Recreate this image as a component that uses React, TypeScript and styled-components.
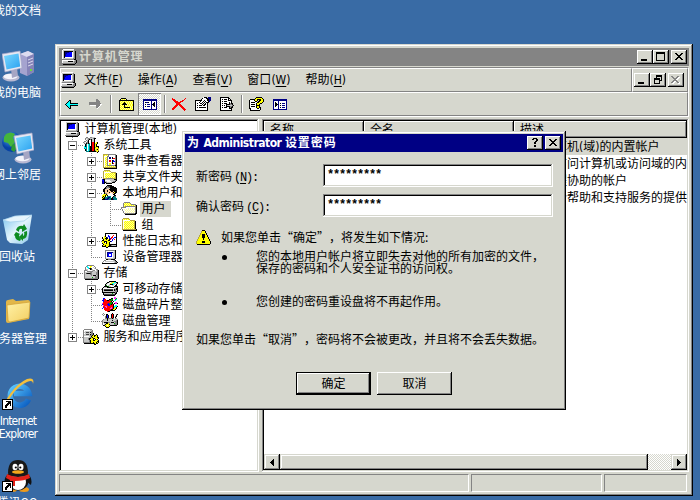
import React from 'react';
import styled, { createGlobalStyle, css } from 'styled-components';

const FACE = '#d6d7ce';
const GRAY = '#848484';
const NAVY = '#000084';

const Global = createGlobalStyle`
  * { box-sizing: border-box; }
  body { margin: 0; background: #396ba5; overflow: hidden; }
  svg { display: block; flex: none; }
`;

const raised = css`
  box-shadow: inset -1px -1px #000, inset 1px 1px #fff, inset -2px -2px ${GRAY};
`;
const windowEdge = css`
  box-shadow: inset -1px -1px #000, inset 1px 1px ${FACE}, inset -2px -2px ${GRAY}, inset 2px 2px #fff;
`;
const sunken = css`
  box-shadow: inset -1px -1px #fff, inset 1px 1px ${GRAY}, inset -2px -2px ${FACE}, inset 2px 2px #000;
`;

/* ---------- pixel icons ---------- */

const palette: Record<string, string> = {
  k: '#000', w: '#fff', g: '#848484', l: '#c6c7c6', b: '#0000ff', n: '#000084',
  y: '#ffff00', Y: '#ffff9c', o: '#b5a542', c: '#00ffff', r: '#ff0000', R: '#840000',
  G: '#00a200', t: '#008284', s: '#ffcf9c', d: '#424142', m: '#ff31ff',
};

function Pixels({ rows }: { rows: string[] }) {
  const w = Math.max(...rows.map((r) => r.length));
  const out: React.ReactNode[] = [];
  rows.forEach((row, y) => {
    let x = 0;
    while (x < row.length) {
      const ch = row[x];
      let end = x + 1;
      while (end < row.length && row[end] === ch) end++;
      if (palette[ch]) out.push(<rect key={`${x}-${y}`} x={x} y={y} width={end - x} height={1} fill={palette[ch]} />);
      x = end;
    }
  });
  return <svg width={w} height={rows.length} shapeRendering="crispEdges">{out}</svg>;
}

const art = {
  computer: [
    '..wwwwwwwwwww...',
    '.wlllllllllllg..',
    '.wlkkkkkkkkklgk.',
    '.wlknnnnbbbwlgk.',
    '.wlknnbbbbbwlgk.',
    '.wlknbbbbbbwlgk.',
    '.wlknbbbbbbwlgk.',
    '.wlkbbbbbbbwlgk.',
    '.wlkwwwwwwwwlgk.',
    '.wllllllllllggk.',
    '..gggggggggggkk.',
    '.wwwwwwwwwwwwlgk',
    '.wlllllkkkkklggk',
    '.wlllllllllllggk',
    '.gggggggggggggk.',
    '..kkkkkkkkkkkk..',
  ],
  folder: [
    '................',
    '..oooooo........',
    '.oYyYyYyo.......',
    '.owwwwwwwooooo..',
    '.owYyYyYyYyYyok.',
    '.owyYyYyYyYyYok.',
    '.owYyYyYyYyYyok.',
    '.owyYyYyYyYyYok.',
    '.owYyYyYyYyYyok.',
    '.owyYyYyYyYyYok.',
    '.owYyYyYyYyYyok.',
    '.owyYyYyYyYyYok.',
    '.ooooooooooooook',
    '..kkkkkkkkkkkkkk',
    '................',
    '................',
  ],
  folderOpen: [
    '................',
    '...gggggg.......',
    '..gYyYyYyg......',
    '..gyYyYyYyggggg.',
    '..gYyYyYyYyYyYgk',
    '..gyggggggggggok',
    'gggggwwwwwwwwwgk',
    'gwwwwwwYwYwYwYgk',
    '.gwYwYwYwYwYwYgk',
    '.gwwYwYwYwYwYwgk',
    '..gwwYwYwYwYwYgk',
    '..gwYwYwYwYwYwgk',
    '...gggggggggggkk',
    '....kkkkkkkkkkk.',
    '................',
    '................',
  ],
  tools: [
    '...gg..gglll....',
    '..gllgglllgkk...',
    '..gwlgkgkllk....',
    '...glk..kllk....',
    '.gg.gk..kllk....',
    'glwggk..krrk.yk.',
    '.glkgkt.krrkyyk.',
    '..ktwct.krrkyk..',
    '..ktwct.krrkyk..',
    '.cktwctkkrrkykkk',
    '.cctwctkkrrkoyyk',
    '.tctwctkkrrkyyyo',
    '..ktwctkkrrkyoky',
    '..ktwctkkrrkoyyo',
    '...tttkkkkkkkoyk',
    '..............k.',
  ],
  events: [
    '................',
    '.ooooogggggggg..',
    '.oyYyYgwwwwwwgk.',
    '.owwwggwwwwwwgk.',
    '.owYygwnnwkwwgk.',
    '.owyYgwnnwkrrgk.',
    '.owYygwwwwwwwgk.',
    '.owyYgwrrwkbwgk.',
    '.owYygwrrwkbbgk.',
    '.owyYgwwwwkwwgk.',
    '.owYygwyywkrwgk.',
    '.owyYgwyywwwwgk.',
    '.owYyggggggggkk.',
    '.owyYyYyYyYyYok.',
    '.oooooooooooook.',
    '..kkkkkkkkkkkkk.',
  ],
  share: [
    '................',
    '..oooooo........',
    '.oYyYyYyo.......',
    '.owwwwwwwooooo..',
    '.owYyYyYyYyYyok.',
    '.owyYyYyYyYyYok.',
    '.owYyYyYyYyYyok.',
    '.owyYyYyYyYyYok.',
    '.owYyYyYyYyYyok.',
    '.oooogggggooook.',
    'bkklllllllllkkk.',
    'bbkwwwwwlllllgk.',
    'nbkllwwwwllggk..',
    'nbkkglllllkkk...',
    'nnk.kkkkkk......',
    '................',
  ],
  users: [
    '.....kkkkk......',
    '....kgddkkkk....',
    '...kgggdkkkkkk..',
    '..kkgllskkkkkkk.',
    '.kklssskkkkkkkk.',
    '.kkssksskkkkkkk.',
    '.kksskssskkskkk.',
    '..ksssskssskykk.',
    '..kggssswwsskk..',
    '.yyykswwwwwkk...',
    'yyykykwwwwwwkk..',
    'ykykwttttwwktg..',
    'kyktttnntwkttt..',
    'ykkttnnttkktttt.',
    'kkknnntttkknttt.',
    '................',
  ],
  perf: [
    '...kkkkkkkkkkkk.',
    '...kwwwwwwwwwwk.',
    '...kwwbwwwwrwwk.',
    '..ykwwbbwwrwwwk.',
    'k.yykbwbwrrwbbk.',
    'kyykkkwbbrwbwwk.',
    '.kyykyykrwbwrwk.',
    'kkyyyykkwwbwwwk.',
    'yykkkyyykbwwwwk.',
    'yyk.kyykwwwwwwk.',
    'kyyykyykwwwwwwk.',
    '.kyyyyykkkkkkkk.',
    'kyykyyykkgllllk.',
    'kkkkyykkkkkkkkk.',
    '....kk..........',
    '................',
  ],
  device: [
    '................',
    '...ggggggggggk..',
    '...gwwwwwwwwlk..',
    '...gwnnnnnnllk..',
    '...gwnbbbbwllk..',
    '...gwnbwwbwllk..',
    '...gwnbwwbwllk..',
    '...gwnbbbbwllk..',
    '...gwwwwwwwllk..',
    '...gllllllllgk..',
    '....kkgggkkkk...',
    '..ggwwwwwwwlgk..',
    '.gwllllllllllgk.',
    'gwwwwwwwwwwwlggk',
    'kkkkkkkkkkkkkkk.',
    '................',
  ],
  storage: [
    '....ggggggg.....',
    '...gcwwyywwg....',
    '..gwccwywwlwg...',
    '..gwwcdkdwwlg...',
    '..gllwwkdlwwwgg.',
    '.ggglwwwwlggwlgk',
    '.gwwggggggllllgk',
    '.glllllggllllggk',
    '.gldkkkdgllllggk',
    '.glllllggllllggk',
    '.gllllllglkkklgk',
    '.gllllllllllgggk',
    '.glllllllGllgggk',
    '.ggggggggggggggk',
    '..kkkkkkkkkkkkk.',
    '................',
  ],
  removable: [
    '.......kkkkkkk..',
    '.....kklwlyycckk',
    '....klwwyycclllk',
    '...klwwlkkkclwk.',
    '...kGwllwwllwkk.',
    '..kkkkGllwwwkkkk',
    '.klllkkkkkkklllk',
    'kwwwwwwwwwwwllkk',
    'kldddddddddlkgkk',
    'klkkkkkkkkklkggk',
    'kllllllllllllggk',
    'kkkkkkkkkkkkkgk.',
    '.kllllllllGllkk.',
    '.kdddddddddddk..',
    '..kkkkkkkkkkk...',
    '................',
  ],
  defrag: [
    '............mm..',
    '.bb......kk.mmG.',
    '.brr...kkGG..Gc.',
    'bbrrrkkrGGk.cc..',
    '.brrrrrrrk.k....',
    '.rrrrrrrGGk..mm.',
    'mrrrrrbGGGk.kmmk',
    'brrrrbbbGkrk....',
    '.mrrrrbbrrrk.cc.',
    '.rrmmrrrrrrkccck',
    '.brrmrrrrmrkcyk.',
    'b.rrrrrrmmrkyyk.',
    '..rrrrrrrkkyyk..',
    '...rrrrrkkkkk...',
    '.....rkk........',
    '................',
  ],
  disk: [
    '.g........k..ww.',
    'gwg.kk...krk.wgk',
    '.gw.kbk..krk.wk.',
    '..wgkbk..krkwgk.',
    '..wgkbk..krkwk..',
    '..wggkggggkgwgg.',
    '.glllklllllllllg',
    'gllllkllllklllgk',
    'glllllllllllgggk',
    'glkkkkgglkkklggk',
    'gwllkkylllllGggk',
    'gwlkyyykllllgggk',
    '.kkyywyykkkkkkk.',
    '...kyyyk........',
    '....kkk.........',
    '................',
  ],
  services: [
    '.gggggggg.......',
    'gwwwwwwllg......',
    'gwllllllgg......',
    'glldddlkgg......',
    'gwllllllggk.....',
    'glldddlkggk..k..',
    'gllllllggkykkyk.',
    'gwwwwwllkyykyyk.',
    'gllllllggkyyyykk',
    'gllllgkkyykkyyyk',
    'gllllgkyyyk.kyk.',
    'glllllgkyykkyyyk',
    'glllllgkyyyyyykk',
    'gggggggkyykyykyk',
    '.kkkkkkkkkkkykk.',
    '...........kk...',
  ],
  back: [
    '....kk.......',
    '...kck.......',
    '..kcck.......',
    '.kccckkkkkkkk',
    'kcccccccccccc',
    '.kccckkkkkkkk',
    '..kcck.......',
    '...kck.......',
    '....kk.......',
  ],
  forward: [
    '.......gg....',
    '.......ggg...',
    '.......gggg..',
    'ggggggggggg..',
    'gggggggggggg.',
    'gggggggggggww',
    '.wwwwwwggggw.',
    '.......gggw..',
    '.......ggw...',
    '........w....',
  ],
  up: [
    '..kkkkk........',
    '.kYyYyYk.......',
    'kkkkkkkkkkkkkkk',
    'kyYyYyYyYyYyYyk',
    'kYyYykyYyYyYyYk',
    'kyYykkkYyYyYyYk',
    'kYykkkkkYyYyYyk',
    'kyYyYkYyYyYyYyk',
    'kYyYykyYyYyYyYk',
    'kyYyYkkkkkkYyYk',
    'kYyYyYyYyYyYyYk',
    'kyYyYyYyYyYyYyk',
    'kkkkkkkkkkkkkkk',
  ],
  treePane: [
    'nnnnnnnnnnnnnn',
    'nnnnnnnnnnnnnn',
    'nwwwwwwwnwwwwn',
    'nwknnkwwnwwkwn',
    'nwwwwwwwnwkkwn',
    'nwkwnnnwnkkkwn',
    'nwwwwwwwnwkkwn',
    'nwkwnnnwnwwkwn',
    'nwwwwwwwnwwwwn',
    'nwwwwwwwnwwwwn',
    'nnnnnnnnnnnnnn',
  ],
  actionPane: [
    'nnnnnnnnnnnnnn',
    'nnnnnnnnnnnnnn',
    'nwwwwnwwwwwwwn',
    'nwkwwnwwwwwwwn',
    'nwkkwnwkwnnnwn',
    'nwkkknwwwwwwwn',
    'nwkkwnwkwnnnwn',
    'nwkwwnwwwwwwwn',
    'nwwwwnwkwnnnwn',
    'nwwwwnwwwwwwwn',
    'nnnnnnnnnnnnnn',
  ],
  del: [
    'r............r',
    'rrr.........r.',
    '.rrr......rr..',
    '..rrrr..rrr...',
    '...rrrrrr.....',
    '....rrrr......',
    '....rrrrr.....',
    '...rrr.rrr....',
    '..rrr...rrr...',
    '.rrr.....rrr..',
    'rrr.......rrr.',
    'rr.........rrr',
    '............r.',
  ],
  props: [
    '........wkkk.nnn',
    '.......kwwwkknnn',
    '......kwwwwwkknn',
    'kkkkkkkwwkwwkknn',
    'kwwwwkwwkwkwwkn.',
    'kwwwkwwkwkwkkk..',
    'kwkwwkkwkwkwk...',
    'kwwwwwwkwkkwk...',
    'kwkwkkkwkkwwk...',
    'kwwwwwwwwwwwk...',
    'kwkwkkkkkkkwk...',
    'kwwwwwwwwwwwk...',
    'kwwwwwwwwwwwk...',
    'kkkkkkkkkkkkk...',
  ],
  exportList: [
    'kkkkkkkkk.....',
    'kwwwwwwwkk....',
    'kwkwkkkwkwk...',
    'kwwwwwwwkkkk..',
    'kwkwkkkwwwwk..',
    'kwwwwwwwwkwk..',
    'kwkwkkkwwkgkk.',
    'kwwwwwkkkkggk.',
    'kwkwkwklllllgk',
    'kwwwwwkkkkggk.',
    'kwkwkkkwwkgkk.',
    'kwwwwwwwwkkk..',
    'kwwwwwwwwwwk..',
    'kkkkkkkkkkkk..',
  ],
  help: [
    '.......kkkkkk..',
    '......kyyyyyyk.',
    '.kkkkkyykkkkyyk',
    'kwwwwkyyk.kkyyk',
    'kwwwwwkk.kkyyyk',
    'kwkkkkwwkkyyyk.',
    'kwwwwwwkyyykk..',
    'kwkkkkwkyyk....',
    'kwwwwwwkkkk....',
    'kwkkkkwkyyk....',
    'kwwwwwwkyykk...',
    'kkwwwwwwkkwk...',
    '.kwwwwwwwwwk...',
    '.kkkkkkkkkk....',
  ],
  warning: [
    '......kkk......',
    '.....oyyyk.....',
    '.....oyyyk.....',
    '....oyyyyyk....',
    '....oykkkyk....',
    '...oyykkkyyk...',
    '...oyykkkyyk...',
    '..oyyykkkyyyk..',
    '..oyyyykyyyyk..',
    '.oyyyyykyyyyyk.',
    '.oyyyyyyyyyyyk.',
    'oyyyyykkkyyyyyk',
    'oyyyyykkkyyyyyk',
    'oyyyyyyyyyyyyyk',
    '.kkkkkkkkkkkkk.',
  ],
  min: ['.......', '.......', '.......', '.......', '.......', '.......', 'kkkkkk.', 'kkkkkk.'],
  max: ['kkkkkkkkk', 'kkkkkkkkk', 'k.......k', 'k.......k', 'k.......k', 'k.......k', 'k.......k', 'k.......k', 'kkkkkkkkk'],
  restore: ['..kkkkkk', '..kkkkkk', '..k....k', 'kkkkkk.k', 'kkkkkk.k', 'k....kkk', 'k....k..', 'k....k..', 'kkkkkk..'],
  close: ['kk....kk', '.kk..kk.', '..kkkk..', '...kk...', '..kkkk..', '.kk..kk.', 'kk....kk'],
  closeOff: ['gg....gg.', '.gg..ggww', '..ggggww.', '...ggww..', '..gggg...', '.ggwwgg..', 'ggww..ggw', '.ww....ww'],
  question: ['.kkkk.', 'kk..kk', '....kk', '...kk.', '..kk..', '..kk..', '......', '..kk..', '..kk..'],
  left: ['...k', '..kk', '.kkk', 'kkkk', '.kkk', '..kk', '...k'],
  right: ['k...', 'kk..', 'kkk.', 'kkkk', 'kkk.', 'kk..', 'k...'],
  plus: ['ggggggggg', 'gwwwwwwwg', 'gwwwkwwwg', 'gwwwkwwwg', 'gwkkkkkwg', 'gwwwkwwwg', 'gwwwkwwwg', 'gwwwwwwwg', 'ggggggggg'],
  minus: ['ggggggggg', 'gwwwwwwwg', 'gwwwwwwwg', 'gwwwwwwwg', 'gwkkkkkwg', 'gwwwwwwwg', 'gwwwwwwwg', 'gwwwwwwwg', 'ggggggggg'],
};

/* ---------- desktop icons ---------- */

const Monitor = ({ x = 0, y = 0 }: { x?: number; y?: number }) => (
  <g transform={`translate(${x} ${y})`}>
    <ellipse cx="9" cy="27.500" rx="8.500" ry="4" fill="#b9b9d2" />
    <ellipse cx="8.500" cy="26.500" rx="7" ry="2.800" fill="#f4f4fb" />
    <path d="M9 19l6-1 1 8-6 2z" fill="#a6a6c4" />
    <path d="M0 4L18 1l2 17-17 4z" fill="#e6e7f2" stroke="#a3a3c6" strokeWidth=".7" />
    <path d="M2 6l14.500-2.500 1.700 13L4.500 19.500z" fill="url(#screen)" />
  </g>
);

const Shortcut = () => (
  <g shapeRendering="crispEdges">
    <rect x="0" y="21" width="11" height="11" fill="#000" />
    <rect x="1" y="22" width="9" height="9" fill="#fff" />
    <path d="M4 23h5v5h-1v-2h-1v1H6v1H5v2H3v-3h1v-1h1v-1h1v-1H4z" fill="#000" />
  </g>
);

const desktopArt: Record<string, React.ReactNode> = {
  pc: (
    <>
      <path d="M18 4l8-3 6 3v18l-7 4-7-3z" fill="#a5a3cf" />
      <path d="M18 4l8-3 6 3-7 3z" fill="#dddcf0" />
      <path d="M25 7l7-3v18l-7 4z" fill="#8583b8" />
      <path d="M26 10l5-2M26 13l5-2M26 16l5-2" stroke="#dad9ee" />
      <rect x="28" y="19" width="2" height="2" fill="#6bdc3c" />
      <Monitor />
    </>
  ),
  net: (
    <>
      <circle cx="10" cy="10" r="10" fill="url(#globe)" />
      <path d="M4 2q5-3 9 0l-2 4 2 4-4 5-3-4-4-1q-1-5 2-8z" fill="#45b53c" />
      <path d="M10 13l4-2 2 4-4 5-3-2z" fill="#2f9a35" />
      <Monitor x={12} y={0} />
    </>
  ),
  bin: (
    <>
      <path d="M1 6L13 2l17-1-4 25-6 4-12-1-3-3z" fill="url(#glass)" />
      <path d="M1 6l12-4 17-1-8 6-14 1z" fill="#e6f5fd" stroke="#a3cfe9" strokeWidth=".7" />
      <path d="M14 16q2-5 7-4l1-2 3 5-5 3 0-3q-3-1-3 3zM25 17q1 7-4 8l0 2-4-4 4-4v3q2-1 1-4zM14 18l4 2-1 1q0 3 2 4l-1 2q-5-1-5-5l-1-1z" fill="#0f8c22" />
    </>
  ),
  folder: (
    <>
      <path d="M4 6q0-2 2-2l5-1 3 2 12-1q2 0 2 2l-1 17-21 4q-2 0-2-2z" fill="#e2b648" />
      <path d="M5 9l23-3-1 16-19 4q-2 0-2-2z" fill="url(#fold)" stroke="#cf9f35" strokeWidth=".7" />
    </>
  ),
  ie: (
    <>
      <path d="M26.500 21.500A9.500 9.500 0 1 1 27 15.500H12" fill="none" stroke="url(#blue)" strokeWidth="5.500" />
      <path d="M3 30Q1 26 8 16 16 5 25 1q8-2 6 5 0-5-6-2Q16 8 10 17 4 25 6 28z" fill="#f4bf3c" />
      <Shortcut />
    </>
  ),
  qq: (
    <>
      <ellipse cx="10" cy="29.500" rx="5" ry="2.500" fill="#ef9b1b" />
      <ellipse cx="22" cy="29.500" rx="5" ry="2.500" fill="#ef9b1b" />
      <path d="M6 14q-5 5-3 11l4-3h18l4 3q2-6-3-11z" fill="#111" />
      <ellipse cx="16" cy="21" rx="10.500" ry="9.500" fill="#111" />
      <ellipse cx="16" cy="22" rx="8" ry="8" fill="#fff" />
      <path d="M6 13Q6 0 16 0t10 13q0 4-10 4T6 13z" fill="#181818" />
      <ellipse cx="13" cy="7" rx="2.500" ry="3.300" fill="#fff" />
      <ellipse cx="19" cy="7" rx="2.500" ry="3.300" fill="#fff" />
      <circle cx="13.800" cy="7.500" r="1.100" fill="#000" />
      <circle cx="18.300" cy="7.500" r="1.100" fill="#000" />
      <ellipse cx="16" cy="12" rx="6" ry="1.800" fill="#f5a81c" />
      <path d="M5 14q11 6 22 0l1 4q-6 3-15 3v5H8v-6l-4-2z" fill="#e2231a" />
      <Shortcut />
    </>
  ),
};

const Defs = () => (
  <defs>
    <linearGradient id="screen" x1="0" y1="0" x2="1" y2="1"><stop stopColor="#7bd8ff" /><stop offset="1" stopColor="#2ba2f0" /></linearGradient>
    <radialGradient id="globe" cx=".4" cy=".3"><stop stopColor="#4ba2ee" /><stop offset="1" stopColor="#0742a5" /></radialGradient>
    <linearGradient id="glass" x1="0" y1="0" x2="1" y2="1"><stop stopColor="#7cc4ee" /><stop offset=".5" stopColor="#e3f4fc" /><stop offset="1" stopColor="#8cc8ea" /></linearGradient>
    <linearGradient id="fold" x1="0" y1="0" x2="1" y2="1"><stop stopColor="#fff2a8" /><stop offset="1" stopColor="#f3cf62" /></linearGradient>
    <linearGradient id="blue" x1="0" y1="0" x2="1" y2="1"><stop stopColor="#5cc8ff" /><stop offset="1" stopColor="#0a5cc0" /></linearGradient>
  </defs>
);

const Desktop = styled.div`
  position: relative;
  width: 700px;
  height: 500px;
  overflow: hidden;
  background: #396ba5;
  color: #000;
  font: 12px/16px "DejaVu Sans Condensed", "Noto Sans CJK SC", sans-serif;
  white-space: nowrap;
  text-spacing-trim: space-all;
`;
const IconColumn = styled.div`
  display: flex;
  flex-direction: column;
  width: 100px;
  margin: -32px 0 0 -32px;
`;
const Shortcuts = styled.div`
  height: 82px;
  flex: none;
  display: flex;
  flex-direction: column;
  align-items: center;
  gap: 5px;
`;
const Picture = styled.svg`
  width: 32px;
  height: 32px;
`;
const Caption = styled.span<{ $latin: boolean }>`
  margin-right: ${(p) => (p.$latin ? 0 : 2)}px;
  color: #fff;
  line-height: 13px;
  text-align: center;
  white-space: pre;
  letter-spacing: ${(p) => (p.$latin ? '-0.8px' : '0')};
`;

/* ---------- windows ---------- */

const Win = styled.section<{ $x: number; $y: number; $w: number; $h: number; $pad: number }>`
  position: absolute;
  left: ${(p) => p.$x}px;
  top: ${(p) => p.$y}px;
  width: ${(p) => p.$w}px;
  height: ${(p) => p.$h}px;
  padding: ${(p) => p.$pad}px;
  display: flex;
  flex-direction: column;
  background: ${FACE};
  ${windowEdge}
`;
const TitleBar = styled.header<{ $active?: boolean }>`
  flex: none;
  height: 18px;
  padding: 0 2px;
  display: flex;
  align-items: center;
  gap: 2px;
  background: ${(p) => (p.$active ? NAVY : GRAY)};
  color: ${(p) => (p.$active ? '#fff' : FACE)};
  font-weight: bold;
`;
const TitleText = styled.h1`
  flex: 1;
  margin: 0;
  display: flex;
  gap: 3.500px;
  font-size: 12px;
  line-height: 18px;
`;
const Wide = styled.span`
  letter-spacing: 0.9px;
`;
const Tight = styled.span`
  letter-spacing: -0.5px;
`;
const Caps = styled.div`
  display: flex;
`;
const CapButton = styled.button`
  width: 16px;
  height: 14px;
  padding: 0 1px 1px 0;
  border: 0;
  display: flex;
  align-items: center;
  justify-content: center;
  background: ${FACE};
  ${raised}
`;

const Rebar = styled.div`
  flex: none;
  margin-top: 1px;
  height: 50px;
  border: 1px solid;
  border-color: ${GRAY} #fff #fff ${GRAY};
  display: flex;
  flex-direction: column;
`;
const BandRow = styled.div`
  display: flex;
  height: 24px;
`;
const Band = styled.div<{ $w?: number }>`
  flex: ${(p) => (p.$w ? 'none' : 1)};
  width: ${(p) => (p.$w ? `${p.$w}px` : 'auto')};
  border: 1px solid;
  border-color: #fff ${GRAY} ${GRAY} #fff;
  display: flex;
  align-items: center;
`;
const Menu = styled.nav`
  display: flex;
  gap: 15px;
  margin-left: 7px;
`;
const MenuItem = styled.span`
  u { text-underline-offset: 2px; }
`;
const MenuIcon = styled.span`
  margin-left: 1px;
`;
const MdiIcon = styled.span`
  margin-left: -1px;
  margin-right: 1px;
`;
const Tool = styled.span<{ $w: number; $down?: boolean }>`
  width: ${(p) => p.$w}px;
  height: 22px;
  display: flex;
  align-items: center;
  justify-content: center;
  ${(p) => p.$down && css`
    background: repeating-conic-gradient(#fff 0 25%, ${FACE} 0 50%) 0 0 / 2px 2px;
    box-shadow: inset 1px 1px ${GRAY}, inset -1px -1px #fff;
  `}
`;
const Rule = styled.span<{ $l: number; $r: number }>`
  width: 2px;
  height: 18px;
  margin: 0 ${(p) => p.$r}px 0 ${(p) => p.$l}px;
  border-left: 1px solid ${GRAY};
  border-right: 1px solid #fff;
`;

const Panes = styled.main`
  flex: none;
  height: 353px;
  margin-top: 2px;
  display: flex;
  gap: 3px;
`;
const Pane = styled.div<{ $w: number }>`
  width: ${(p) => p.$w}px;
  padding: 2px;
  display: flex;
  flex-direction: column;
  background: #fff;
  ${sunken}
`;
const TreeRow = styled.div`
  height: 16px;
  padding-left: 3px;
  display: flex;
  overflow: hidden;
`;
const dotsV = `repeating-linear-gradient(to bottom, ${GRAY} 0 1px, transparent 1px 2px)`;
const dotsH = `repeating-linear-gradient(to right, ${GRAY} 0 1px, transparent 1px 2px)`;
const Guide = styled.span<{ $kind: string }>`
  flex: none;
  width: 19px;
  height: 16px;
  padding: 4px 0 0 4px;
  background-repeat: no-repeat;
  background-image: ${dotsV}${(p) => (p.$kind === 'v' ? '' : `, ${dotsH}`)};
  background-size: 1px ${(p) => (p.$kind === 'e' ? 8 : 16)}px, 11px 1px;
  background-position: 8px 0, 8px 8px;
`;
const NodeText = styled.span<{ $sel?: boolean }>`
  margin-left: 3px;
  padding: 0 5px 0 1.500px;
  background: ${(p) => (p.$sel ? FACE : 'transparent')};
`;

const ListHead = styled.div`
  height: 17px;
  flex: none;
  display: flex;
`;
const HeadCell = styled.div<{ $w: number }>`
  width: ${(p) => p.$w}px;
  padding: 1px 0 0 6px;
  background: ${FACE};
  ${raised}
`;
const ListBody = styled.div`
  flex: 1;
`;
const ListRow = styled.div<{ $sel?: boolean }>`
  height: 17px;
  padding-left: 250px;
  overflow: hidden;
  background: ${(p) => (p.$sel ? FACE : '#fff')};
`;
const ListText = styled.div`
  padding-left: 5px;
  line-height: 19px;
`;
const ScrollBar = styled.div`
  height: 16px;
  flex: none;
  display: flex;
  background: repeating-conic-gradient(#fff 0 25%, ${FACE} 0 50%) 0 0 / 2px 2px;
`;
const ScrollPart = styled.div<{ $w: number }>`
  width: ${(p) => p.$w}px;
  display: flex;
  align-items: center;
  justify-content: center;
  background: ${FACE};
  ${windowEdge}
  &:last-child { margin-left: auto; }
`;
const StatusBar = styled.footer`
  height: 18px;
  margin: 2px 2px 0 0;
  display: flex;
  gap: 2px;
`;
const StatusCell = styled.div<{ $w: number }>`
  width: ${(p) => p.$w}px;
  border: 1px solid;
  border-color: ${GRAY} #fff #fff ${GRAY};
`;

/* ---------- dialog ---------- */

const Form = styled.div`
  padding: 12px 10px 0 11px;
  font-family: "Noto Sans CJK SC", sans-serif;
`;
const Field = styled.label`
  height: 23px;
  margin-bottom: 7px;
  display: flex;
  align-items: center;
`;
const FieldName = styled.span`
  width: 127px;
  padding-top: 1px;
`;
const Mono = styled.span`
  margin-left: 2px;
  font: 12px "Liberation Mono", monospace;
  letter-spacing: -1.2px;
  u { text-underline-offset: 2px; }
`;
const Secret = styled.span`
  width: 230px;
  height: 23px;
  padding: 1px 4px;
  background: #fff;
  font: bold 12px/21px "Liberation Mono", monospace;
  letter-spacing: -1.2px;
  ${sunken}
`;
const Warn = styled.div`
  height: 16px;
  margin-top: 12px;
  display: flex;
  align-items: center;
  gap: 10px;
`;
const WarnText = styled.span`
  padding-bottom: 1px;
`;
const Points = styled.ul`
  margin: 5px 0 0;
  padding: 0;
  list-style: none;
`;
const Point = styled.li`
  height: 45px;
  display: flex;
  line-height: 12px;
  white-space: pre;
`;
const Dot = styled.i`
  width: 5px;
  height: 5px;
  margin: 5px 29px 0 26px;
  border-radius: 50%;
  background: #000;
`;
const Note = styled.p`
  margin: -9px 0 0;
`;
const Actions = styled.div`
  display: flex;
  gap: 6px;
  margin: 25px 0 0 100px;
`;
const Push = styled.button<{ $default?: boolean }>`
  width: 75px;
  height: 23px;
  padding: 0 0 1px;
  border: ${(p) => (p.$default ? '1px solid #000' : '0')};
  background: ${FACE};
  font: inherit;
  ${raised}
`;

const tree: [string, keyof typeof art, string, boolean?][] = [
  ['', 'computer', '计算机管理(本地)'],
  ['-', 'tools', '系统工具'],
  ['v+', 'events', '事件查看器'],
  ['v+', 'share', '共享文件夹'],
  ['v-', 'users', '本地用户和组'],
  ['vvt', 'folderOpen', '用户', true],
  ['vve', 'folder', '组'],
  ['v+', 'perf', '性能日志和警报'],
  ['ve', 'device', '设备管理器'],
  ['-', 'storage', '存储'],
  ['v+', 'removable', '可移动存储'],
  ['vt', 'defrag', '磁盘碎片整理程序'],
  ['ve', 'disk', '磁盘管理'],
  ['E', 'services', '服务和应用程序'],
];

const guideKind = (g: string) => (g === 'v' ? 'v' : g === 'e' || g === 'E' ? 'e' : 't');

const icons: [string, string][] = [
  ['', '我的文档'],
  ['pc', '我的电脑'],
  ['net', '网上邻居'],
  ['bin', '回收站'],
  ['folder', '服务器管理'],
  ['ie', 'Internet\nExplorer'],
  ['qq', '腾讯QQ'],
];

const menus = [['文件', 'F'], ['操作', 'A'], ['查看', 'V'], ['窗口', 'W'], ['帮助', 'H']];

const Cap = ({ icon }: { icon: keyof typeof art }) => (
  <CapButton><Pixels rows={art[icon]} /></CapButton>
);

export default function App() {
  return (
    <Desktop lang="zh-CN">
      <Global />
      <IconColumn>
        {icons.map(([id, label]) => (
          <Shortcuts key={label}>
            <Picture viewBox="0 0 32 32"><Defs />{desktopArt[id]}</Picture>
            <Caption $latin={id === 'ie'}>{label}</Caption>
          </Shortcuts>
        ))}
      </IconColumn>

      <Win $x={55} $y={44} $w={638} $h={452} $pad={4}>
        <TitleBar>
          <Pixels rows={art.computer} />
          <TitleText><Wide>计算机管理</Wide></TitleText>
          <Caps><Cap icon="min" /><Cap icon="max" /></Caps>
          <Cap icon="close" />
        </TitleBar>

        <Rebar>
          <BandRow>
            <Band>
              <MdiIcon><Pixels rows={art.computer} /></MdiIcon>
              <Menu>
                {menus.map(([name, key]) => (
                  <MenuItem key={key}>{name}(<u>{key}</u>)</MenuItem>
                ))}
              </Menu>
            </Band>
            <Band $w={56}>
              <MenuIcon />
              <Caps><Cap icon="min" /><Cap icon="restore" /></Caps>
              <MenuIcon /><MenuIcon />
              <Cap icon="closeOff" />
            </Band>
          </BandRow>
          <BandRow>
            <Band>
              <Tool $w={21}><Pixels rows={art.back} /></Tool>
              <Tool $w={26}><Pixels rows={art.forward} /></Tool>
              <Rule $l={2} $r={2} />
              <Tool $w={24}><Pixels rows={art.up} /></Tool>
              <Tool $w={23} $down><Pixels rows={art.treePane} /></Tool>
              <Rule $l={3} $r={2} />
              <Tool $w={22}><Pixels rows={art.del} /></Tool>
              <Tool $w={25}><Pixels rows={art.props} /></Tool>
              <Tool $w={24}><Pixels rows={art.exportList} /></Tool>
              <Rule $l={2} $r={2} />
              <Tool $w={23}><Pixels rows={art.help} /></Tool>
              <Tool $w={23}><Pixels rows={art.actionPane} /></Tool>
            </Band>
          </BandRow>
        </Rebar>

        <Panes>
          <Pane $w={200}>
            {tree.map(([guides, icon, label, sel]) => (
              <TreeRow key={label}>
                {guides.split('').map((g, i) => (
                  <Guide key={i} $kind={guideKind(g)}>
                    {(g === '+' || g === 'E') && <Pixels rows={art.plus} />}
                    {g === '-' && <Pixels rows={art.minus} />}
                  </Guide>
                ))}
                <Pixels rows={art[icon]} />
                <NodeText $sel={sel}>{label}</NodeText>
              </TreeRow>
            ))}
          </Pane>
          <Pane $w={427}>
            <ListHead>
              <HeadCell $w={100}>名称</HeadCell>
              <HeadCell $w={150}>全名</HeadCell>
              <HeadCell $w={173}>描述</HeadCell>
            </ListHead>
            <ListBody>
              <ListRow $sel><ListText>管理计算机(域)的内置帐户</ListText></ListRow>
              <ListRow><ListText>供来宾访问计算机或访问域的内置帐户</ListText></ListRow>
              <ListRow><ListText>提供远程协助的帐户</ListText></ListRow>
              <ListRow><ListText>这是一个帮助和支持服务的提供商帐户</ListText></ListRow>
            </ListBody>
            <ScrollBar>
              <ScrollPart $w={16}><Pixels rows={art.left} /></ScrollPart>
              <ScrollPart $w={368} />
              <ScrollPart $w={16}><Pixels rows={art.right} /></ScrollPart>
            </ScrollBar>
          </Pane>
        </Panes>

        <StatusBar>
          <StatusCell $w={410} />
          <StatusCell $w={131} />
          <StatusCell $w={83} />
        </StatusBar>
      </Win>

      <Win $x={182} $y={131} $w={384} $h={279} $pad={3}>
        <TitleBar $active>
          <TitleText><Wide>为</Wide><Tight>Administrator</Tight><Wide>设置密码</Wide></TitleText>
          <Cap icon="question" />
          <Cap icon="close" />
        </TitleBar>
        <Form>
          <Field>
            <FieldName>新密码<Mono>(<u>N</u>):</Mono></FieldName>
            <Secret>*********</Secret>
          </Field>
          <Field>
            <FieldName>确认密码<Mono>(<u>C</u>):</Mono></FieldName>
            <Secret>*********</Secret>
          </Field>
          <Warn>
            <Pixels rows={art.warning} />
            <WarnText>如果您单击“确定”，将发生如下情况:</WarnText>
          </Warn>
          <Points>
            <Point><Dot />{'您的本地用户帐户将立即失去对他的所有加密的文件，\n保存的密码和个人安全证书的访问权。'}</Point>
            <Point><Dot />您创建的密码重设盘将不再起作用。</Point>
          </Points>
          <Note>如果您单击“取消”，密码将不会被更改，并且将不会丢失数据。</Note>
          <Actions>
            <Push $default>确定</Push>
            <Push>取消</Push>
          </Actions>
        </Form>
      </Win>
    </Desktop>
  );
}
